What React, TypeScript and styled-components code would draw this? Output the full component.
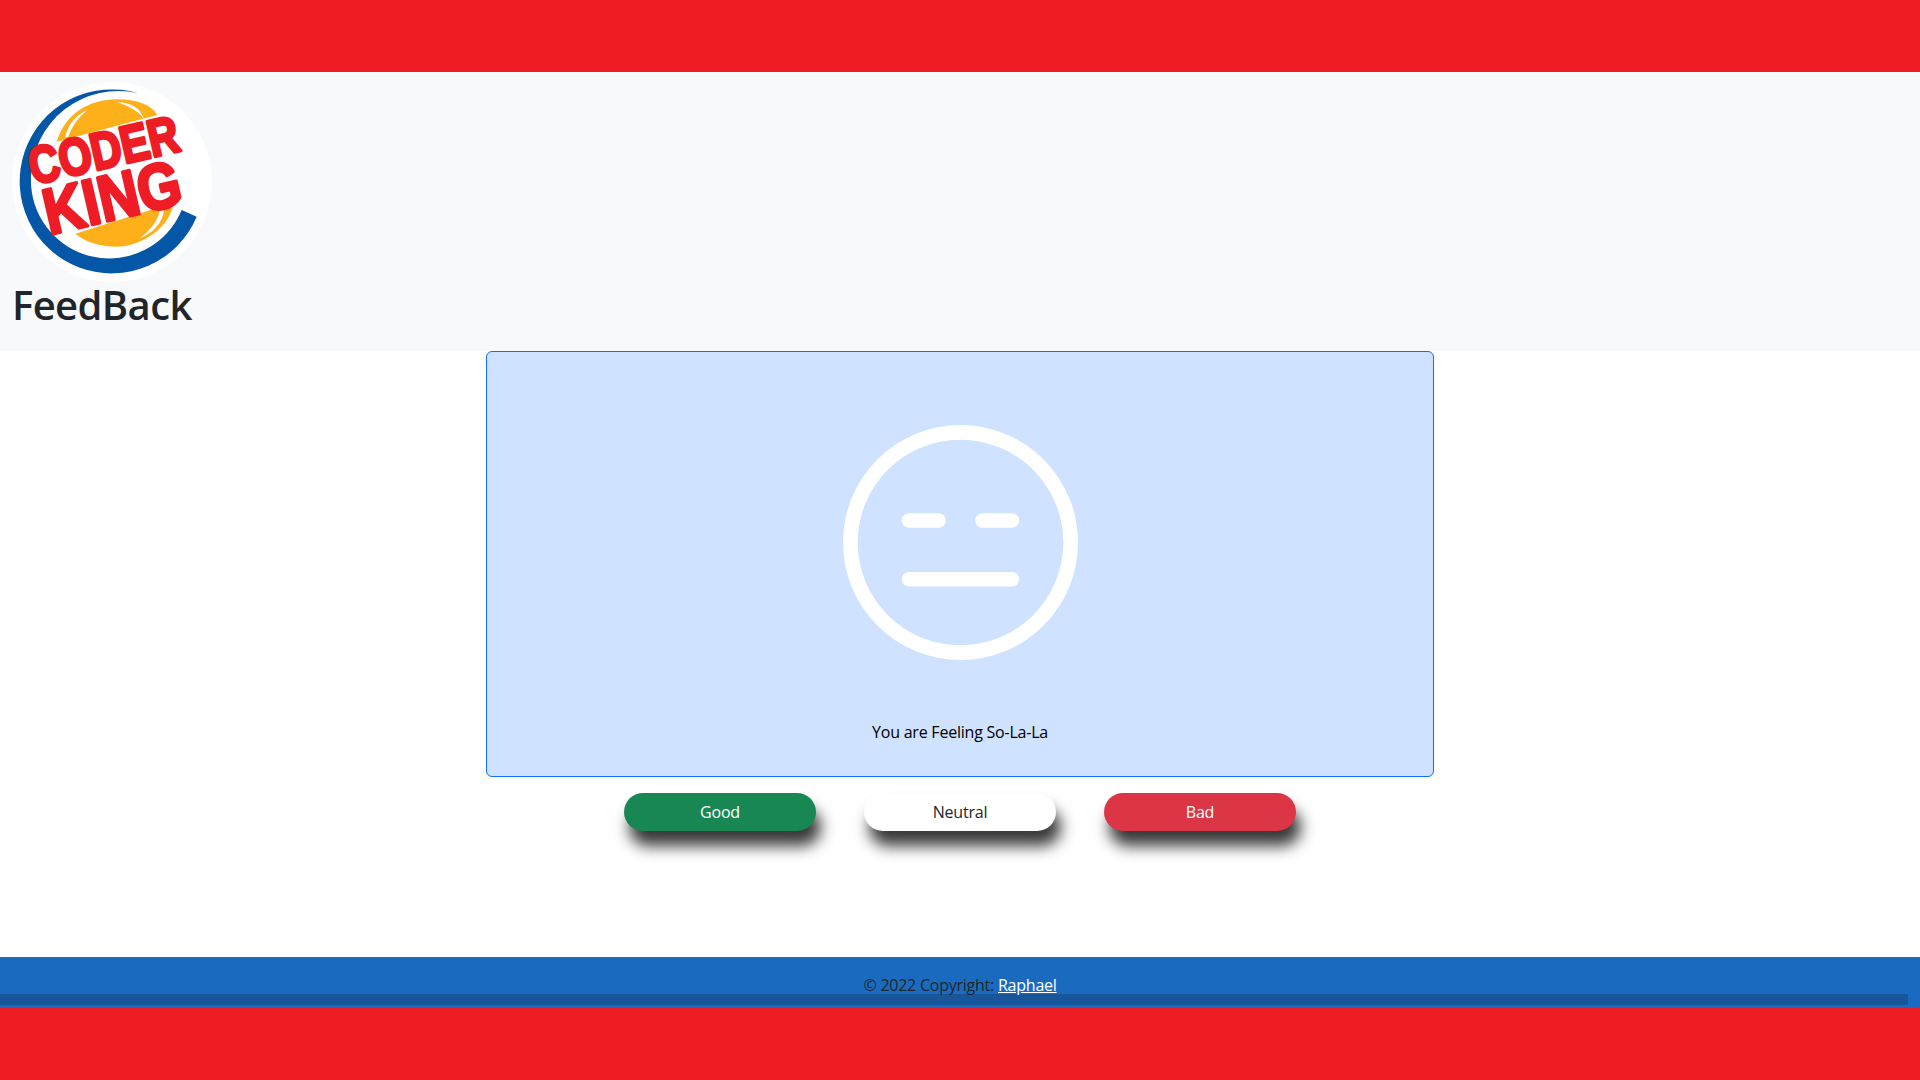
import React from "react";
import styled, { createGlobalStyle } from "styled-components";
import { BsEmojiExpressionless } from "react-icons/bs";

const Global = createGlobalStyle`
  html, body { margin: 0; padding: 0; background: #fff; }
  body { font-family: "Open Sans", "Noto Sans", sans-serif; font-size: 16px; color: #212529; }
`;

const Page = styled.div`
  min-height: 1080px;
  display: flex;
  flex-direction: column;
  overflow: hidden;
`;

const RedBand = styled.div<{ $h: number }>`
  height: ${(p) => p.$h}px;
  background: #ee1d25;
  flex: none;
`;

const Header = styled.header`
  height: 279px;
  flex: none;
  box-sizing: border-box;
  background: #f8f9fa;
  padding: 10px 12px 0;
`;

const LogoSvg = styled.svg`
  display: block;
  width: 200px;
  height: 200px;
  overflow: visible;
`;

const Title = styled.h1`
  margin: -1px 0 0;
  font-size: 40px;
  line-height: 48px;
  font-weight: 600;
  color: #212529;
  letter-spacing: -0.62px;
`;

const Main = styled.main`
  flex: 1;
  display: flex;
  flex-direction: column;
  align-items: center;
`;

const Card = styled.section`
  box-sizing: border-box;
  width: 948px;
  height: 426px;
  background: #cfe2ff;
  border: 1px solid #0d6efd;
  border-radius: 6px;
  display: flex;
  flex-direction: column;
  align-items: center;
  padding-top: 73px;
  color: #fff;
`;

const Caption = styled.p`
  margin: 60px 0 0;
  line-height: 24px;
  color: #000;
  font-size: 16px;
  letter-spacing: -0.22px;
`;

const Buttons = styled.div`
  display: flex;
  gap: 48px;
  margin-top: 16px;
`;

const Pill = styled.button<{ $bg: string; $fg: string }>`
  width: 192px;
  height: 38px;
  border: 0;
  border-radius: 19px;
  background: ${(p) => p.$bg};
  color: ${(p) => p.$fg};
  font: inherit;
  letter-spacing: -0.22px;
  box-shadow: 5px 15px 15px rgba(0, 0, 0, 0.78);
`;

const Footer = styled.footer`
  position: relative;
  flex: none;
  height: 50px;
  background: #1a6bbf;
  text-align: center;
  line-height: 24px;
  padding-top: 16px;
  box-sizing: border-box;
  color: #212529;
  letter-spacing: -0.24px;
`;

const Strip = styled.div`
  position: absolute;
  left: 0;
  right: 12px;
  top: 37px;
  height: 11px;
  background: #17569b;
`;

const FooterText = styled.span`
  position: relative;
`;

const FooterLink = styled.a`
  color: #fff;
  text-decoration: underline;
`;

function Logo() {
  return (
    <LogoSvg viewBox="36 66 600 600" role="img" aria-label="Coder King">
      <circle cx="336" cy="366" r="300" fill="#fff" />
      <path
        d="M415 100 A276 276 0 1 0 590 470 L545 450 A235 235 0 0 1 93 350 A262 262 0 0 1 415 100 Z"
        fill="#0357a6"
      />
      <path d="M170 245 C195 160 270 118 350 118 C410 118 455 135 472 165 Z" fill="#fdb01a" />
      <path d="M226 521 L521 428 C510 500 430 558 350 560 C300 560 255 545 226 521 Z" fill="#fdb01a" />
      <path d="M196 232 C202 195 228 165 262 150 C236 172 216 198 205 230 Z" fill="#fff" />
      <path d="M352 126 C390 128 420 140 432 178 C415 152 388 140 352 126 Z" fill="#fff" />
      <path d="M492 450 C488 490 455 522 420 534 C450 512 472 485 478 456 C482 446 490 444 492 450 Z" fill="#fff" />
      <g
        fontFamily="'Liberation Sans', sans-serif"
        fontWeight="700"
        fill="#ee1d25"
        stroke="#ee1d25"
        strokeWidth="10"
        strokeLinejoin="round"
      >
        <text x="100" y="374" fontSize="156" textLength="458" lengthAdjust="spacingAndGlyphs" transform="rotate(-13 100 374)">
          CODER
        </text>
        <text x="148" y="524" fontSize="194" textLength="418" lengthAdjust="spacingAndGlyphs" transform="rotate(-13 148 524)">
          KING
        </text>
      </g>
    </LogoSvg>
  );
}

export default function App() {
  return (
    <Page>
      <Global />
      <RedBand $h={72} />
      <Header>
        <Logo />
        <Title>FeedBack</Title>
      </Header>
      <Main>
        <Card>
          <BsEmojiExpressionless size={235} color="#fff" />
          <Caption>You are Feeling So-La-La</Caption>
        </Card>
        <Buttons>
          <Pill $bg="#198754" $fg="#fff">Good</Pill>
          <Pill $bg="#fff" $fg="#212529">Neutral</Pill>
          <Pill $bg="#dc3545" $fg="#fff">Bad</Pill>
        </Buttons>
      </Main>
      <Footer>
        <Strip />
        <FooterText>
          © 2022 Copyright: <FooterLink href="#">Raphael</FooterLink>
        </FooterText>
      </Footer>
      <RedBand $h={73} />
    </Page>
  );
}
